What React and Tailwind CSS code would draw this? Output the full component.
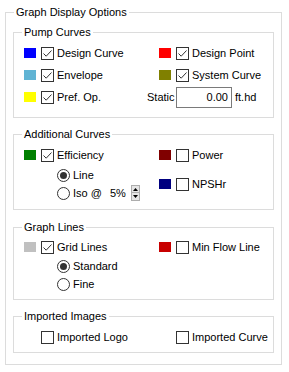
import React from "react";

function Swatch({ className }) {
  return <span className={"w-[12px] h-[10px] shrink-0 " + className} />;
}

function Check({ checked, className = "" }) {
  return (
    <span className={"w-[13px] h-[13px] shrink-0 border border-[#333333] bg-white flex items-center justify-center " + className}>
      {checked && (
        <svg width="11" height="11" viewBox="0 0 11 11">
          <path d="M1.5 5.5 L4.2 8.2 L9.5 2.5" stroke="#333333" strokeWidth="1" fill="none" />
        </svg>
      )}
    </span>
  );
}

function Radio({ checked }) {
  return (
    <svg width="13" height="13" viewBox="0 0 13 13" className="shrink-0">
      <circle cx="6.5" cy="6.5" r="6" fill="#fff" stroke="#333333" strokeWidth="1" />
      {checked && <circle cx="6.5" cy="6.5" r="3.5" fill="#333333" />}
    </svg>
  );
}

function Item({ swatch, checked, label, rowClass = "h-[22px]" }) {
  return (
    <div className={"flex items-center " + rowClass}>
      {swatch ? <Swatch className={swatch} /> : <span className="w-[12px] shrink-0" />}
      <Check checked={checked} className="ml-[5px]" />
      <span className="ml-[3px] whitespace-nowrap">{label}</span>
    </div>
  );
}

function RadioRow({ checked, children }) {
  return (
    <div className="flex items-center h-[18px] pl-[33px]">
      <Radio checked={checked} />
      <span className="ml-[3px] flex items-center whitespace-nowrap">{children}</span>
    </div>
  );
}

function Group({ title, className = "", children }) {
  return (
    <fieldset className={"mx-[7px] border border-[#dcdcdc] " + className}>
      <legend className="ml-[8px] px-[2px] leading-[12px]">{title}</legend>
      {children}
    </fieldset>
  );
}

export default function App() {
  return (
    <div className="w-[289px] h-[372px] bg-white text-black text-[11px] leading-[13px] font-['Liberation_Sans',Arial,sans-serif] pt-[6px] pl-[5px] overflow-hidden">
      <fieldset className="w-[277px] h-[359px] border border-[#dcdcdc]">
        <legend className="ml-[8px] px-[2px] leading-[12px]">Graph Display Options</legend>

        {/* Pump Curves */}
        <Group title="Pump Curves" className="mt-[8px]">
          <div className="grid grid-cols-[135px_1fr] pl-[10px] pt-[4px] pb-[9px]">
            <div>
              <Item swatch="bg-[#0000ff]" checked label="Design Curve" />
              <Item swatch="bg-[#60b4d4]" checked label="Envelope" />
              <Item swatch="bg-[#ffff00]" checked label="Pref. Op." />
            </div>
            <div>
              <Item swatch="bg-[#ff0000]" checked label="Design Point" />
              <Item swatch="bg-[#808000]" checked label="System Curve" />
              <div className="flex items-center h-[22px] -ml-[12px]">
                <span className="w-[29px]">Static</span>
                <div className="w-[56px] h-[21px] border border-[#7a7a7a] flex items-center justify-end pr-[3px]">0.00</div>
                <span className="ml-[3px]">ft.hd</span>
              </div>
            </div>
          </div>
        </Group>

        {/* Additional Curves */}
        <Group title="Additional Curves" className="mt-[10px]">
          <div className="grid grid-cols-[135px_1fr] pl-[10px] pt-[4px] pb-[7px]">
            <div>
              <Item swatch="bg-[#008000]" checked label="Efficiency" />
              <RadioRow checked>Line</RadioRow>
              <RadioRow>
                <span className="w-[37px]">Iso @</span>
                <span>5%</span>
                <span className="ml-[5px] flex flex-col w-[9px]">
                  <span className="h-[8px] border border-[#adadad] bg-[#e5e5e5] flex items-center justify-center">
                    <svg width="5" height="3" viewBox="0 0 5 3"><path d="M0 3 L2.5 0 L5 3 Z" fill="#000" /></svg>
                  </span>
                  <span className="h-[8px] border border-t-0 border-[#adadad] bg-[#e5e5e5] flex items-center justify-center">
                    <svg width="5" height="3" viewBox="0 0 5 3"><path d="M0 0 L2.5 3 L5 0 Z" fill="#000" /></svg>
                  </span>
                </span>
              </RadioRow>
            </div>
            <div>
              <Item swatch="bg-[#800000]" label="Power" />
              <Item swatch="bg-[#000080]" label="NPSHr" rowClass="h-[22px] mt-[7px]" />
            </div>
          </div>
        </Group>

        {/* Graph Lines */}
        <Group title="Graph Lines" className="mt-[11px]">
          <div className="grid grid-cols-[135px_1fr] pl-[10px] pt-[4px] pb-[6px]">
            <div>
              <Item swatch="bg-[#c0c0c0]" checked label="Grid Lines" rowClass="h-[20px]" />
              <RadioRow checked>Standard</RadioRow>
              <RadioRow>Fine</RadioRow>
            </div>
            <div>
              <Item swatch="bg-[#c80000]" label="Min Flow Line" rowClass="h-[20px]" />
            </div>
          </div>
        </Group>

        {/* Imported Images */}
        <Group title="Imported Images" className="mt-[10px]">
          <div className="grid grid-cols-[135px_1fr] pl-[10px] pt-[4px] pb-[4px]">
            <Item label="Imported Logo" />
            <Item label="Imported Curve" />
          </div>
        </Group>
      </fieldset>
    </div>
  );
}
